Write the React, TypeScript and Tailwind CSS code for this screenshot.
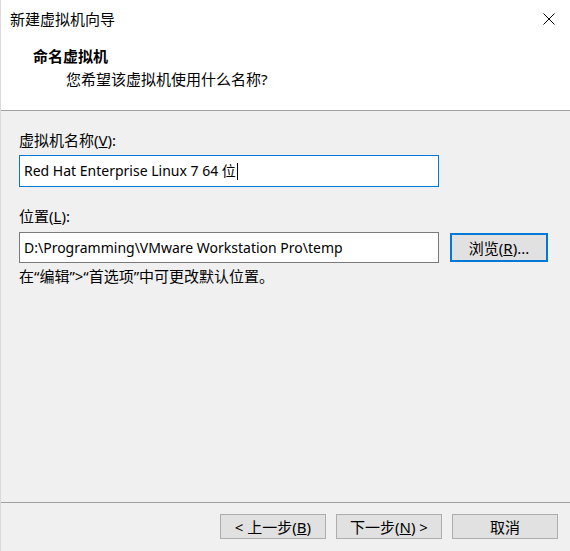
import React from "react";

const FONT = { fontFamily: '"Noto Sans", "Noto Sans CJK SC", sans-serif' };

function WinButton({ children, focused }: { children: React.ReactNode; focused?: boolean }) {
  return (
    <button
      type="button"
      className={
        focused
          ? "flex h-[29px] w-[98px] items-center justify-center border-2 border-[#0078d7] bg-[#e1e1e1] text-[15px] leading-5 text-black"
          : "flex h-[25px] w-[106px] items-center justify-center border border-[#adadad] bg-[#e1e1e1] text-[15px] leading-5 text-black"
      }
    >
      {children}
    </button>
  );
}

export default function App() {
  return (
    <div
      className="flex h-[551px] w-[570px] flex-col border-l border-[#dadada] bg-[#f0f0f0] text-[15px] leading-5 text-black"
      style={FONT}
    >
      {/* header */}
      <div className="flex h-[111px] flex-col border-b border-[#a0a0a0] bg-white">
        <div className="flex h-[38px] items-center justify-between pl-[9px] pr-[15px]">
          <span className="text-[15px]">新建虚拟机向导</span>
          <svg width="12" height="12" viewBox="0 0 12 12" className="text-black">
            <path d="M0.5 0.5 L11.5 11.5 M11.5 0.5 L0.5 11.5" stroke="currentColor" strokeWidth="1" fill="none" />
          </svg>
        </div>
        <div className="mt-[8px] pl-[32px] font-bold">命名虚拟机</div>
        <div className="mt-[3px] pl-[65px]">您希望该虚拟机使用什么名称?</div>
      </div>

      {/* body */}
      <div className="flex flex-1 flex-col pl-[18px] pt-[19px]">
        <div>
          虚拟机名称(<span className="underline">V</span>):
        </div>
        <div className="mt-[5px] flex h-[32px] w-[420px] items-center border border-[#0078d7] bg-white pl-[4px] text-[14px]">
          <span className="whitespace-pre">Red Hat Enterprise Linux 7 64 位</span>
          <span className="ml-[1px] h-[17px] w-px bg-black" />
        </div>

        <div className="mt-[19px]">
          位置(<span className="underline">L</span>):
        </div>
        <div className="mt-[6px] flex items-center gap-[11px]">
          <div className="flex h-[31px] w-[420px] items-center border border-[#7a7a7a] bg-white pl-[4px] text-[14px]">
            <span className="whitespace-pre">D:\Programming\VMware Workstation Pro\temp</span>
          </div>
          <WinButton focused>
            浏览(<span className="underline">R</span>)...
          </WinButton>
        </div>
        <div className="mt-[3px]">在“编辑”&gt;“首选项”中可更改默认位置。</div>
      </div>

      {/* footer */}
      <div className="flex h-[49px] items-start justify-end gap-[10px] border-t border-[#a0a0a0] pr-[12px] pt-[11px]">
        <WinButton>
          &lt; 上一步(<span className="underline">B</span>)
        </WinButton>
        <WinButton>
          下一步(<span className="underline">N</span>) &gt;
        </WinButton>
        <WinButton>取消</WinButton>
      </div>
    </div>
  );
}
